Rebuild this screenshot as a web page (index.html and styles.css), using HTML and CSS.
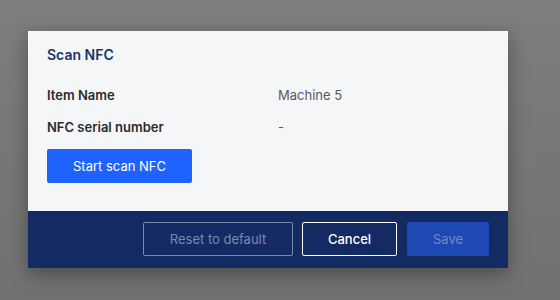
FILE: index.html
```html
<!DOCTYPE html>
<html lang="en">
<head>
  <meta charset="UTF-8" />
  <title>Scan NFC</title>
  <link rel="stylesheet" href="styles.css">
</head>
<body>
  <div class="overlay">
    <div class="dialog">
      <div class="dialog-body">
        <h2 class="dialog-title">Scan NFC</h2>
        <div class="info-row">
          <span class="info-label">Item Name</span>
          <span class="info-value">Machine 5</span>
        </div>
        <div class="info-row">
          <span class="info-label">NFC serial number</span>
          <span class="info-value">-</span>
        </div>
        <button class="btn btn-scan">Start scan NFC</button>
      </div>
      <div class="dialog-footer">
        <button class="btn btn-outline btn-reset">Reset to default</button>
        <button class="btn btn-outline btn-cancel">Cancel</button>
        <button class="btn btn-save">Save</button>
      </div>
    </div>
  </div>
</body>
</html>
```

FILE: styles.css
```css
:root {
  --navy: #132a63;
  --title: #1a3369;
  --blue: #1f63ff;
  --text: #2b2b2b;
  --muted: #555a60;
  --panel: #f5f6f8;
}

* {
  box-sizing: border-box;
  margin: 0;
  padding: 0;
}

body {
  font-family: Inter, 'Noto Sans', sans-serif;
  background: #737373;
}

.overlay {
  width: 560px;
  height: 300px;
  background: linear-gradient(180deg, #7d7d7d 0%, #717171 100%);
  padding: 31px 0 0 28px;
}

.dialog {
  width: 480px;
  box-shadow: 0 6px 18px rgba(0, 0, 0, 0.35);
}

.dialog-body {
  background: var(--panel);
  height: 180px;
  padding: 14px 19px 0 19px;
  display: flex;
  flex-direction: column;
  align-items: flex-start;
}

.dialog-title {
  font-size: 14px;
  font-weight: 600;
  color: var(--title);
  line-height: 20px;
  margin-bottom: 20px;
}

.info-row {
  display: flex;
  font-size: 13px;
  line-height: 20px;
  margin-bottom: 12px;
}

.info-label {
  width: 231px;
  font-weight: 600;
  color: var(--text);
}

.info-value {
  color: var(--muted);
}

.btn {
  font-family: inherit;
  font-size: 13px;
  height: 34px;
  border-radius: 2px;
  cursor: pointer;
}

.btn-scan {
  width: 145px;
  background: var(--blue);
  color: #fff;
  border: none;
}

.dialog-footer {
  background: var(--navy);
  height: 57px;
  display: flex;
  justify-content: flex-end;
  align-items: center;
  gap: 9px;
  padding: 0 19px 1px 0;
}

.btn-outline {
  background: transparent;
}

.btn-reset {
  width: 150px;
  border: 1px solid #7b89ad;
  color: #7b89ad;
}

.btn-cancel {
  width: 95px;
  border: 1px solid #fff;
  color: #fff;
  font-weight: 500;
}

.btn-save {
  width: 82px;
  margin-left: 1px;
  background: #1e48b3;
  border: none;
  color: #7488c4;
}
```
